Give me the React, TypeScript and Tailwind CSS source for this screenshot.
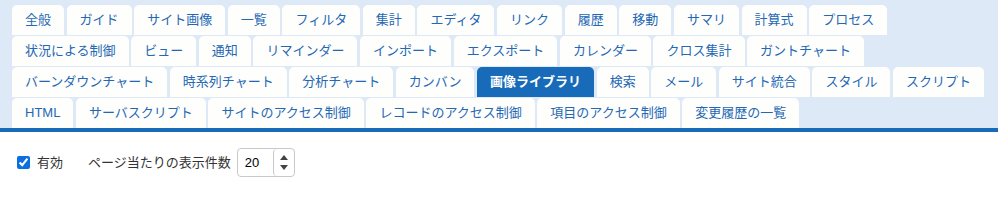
import { useState } from 'react';

const rows: string[] = [
  '全般', 'ガイド', 'サイト画像', '一覧', 'フィルタ', '集計', 'エディタ', 'リンク', '履歴', '移動', 'サマリ', '計算式', 'プロセス',
  '状況による制御', 'ビュー', '通知', 'リマインダー', 'インポート', 'エクスポート', 'カレンダー', 'クロス集計', 'ガントチャート',
  'バーンダウンチャート', '時系列チャート', '分析チャート', 'カンバン', '画像ライブラリ', '検索', 'メール', 'サイト統合', 'スタイル', 'スクリプト',
  'HTML', 'サーバスクリプト', 'サイトのアクセス制御', 'レコードのアクセス制御', '項目のアクセス制御', '変更履歴の一覧',
];

export default function App() {
  const [active, setActive] = useState('画像ライブラリ');
  const [enabled, setEnabled] = useState(true);
  const [perPage, setPerPage] = useState(20);

  return (
    <div className="w-[998px] h-[221px] bg-white text-[13px] font-['Liberation_Sans','Noto_Sans_CJK_JP',sans-serif]">
      {/* Tabs */}
      <div className="bg-[#dde9f7] pt-[5px] px-[12px] border-b-4 border-[#176bb9]">
        <ul className="flex flex-wrap gap-x-[2.6px] gap-y-[1px]">
          {rows.map(label => (
            <li key={label}>
              <button
                onClick={() => setActive(label)}
                className={
                  label === active
                    ? 'h-[30px] px-[13px] rounded-t-[5px] bg-[#176bb9] text-white font-bold leading-[30px] whitespace-nowrap'
                    : 'h-[30px] px-[13px] rounded-t-[5px] bg-[#fefefd] text-[#2468b4] leading-[30px] whitespace-nowrap'
                }
              >
                {label}
              </button>
            </li>
          ))}
        </ul>
      </div>

      {/* Settings */}
      <div className="flex items-center pl-[17px] pt-[16px] text-[#333]">
        <label className="flex items-center gap-[7px]">
          <input
            type="checkbox"
            checked={enabled}
            onChange={e => setEnabled(e.target.checked)}
            className="w-[13px] h-[13px] m-0 accent-[#0b6fe0]"
          />
          <span>有効</span>
        </label>
        <span className="ml-[25px]">ページ当たりの表示件数</span>
        <div className="ml-[6px] flex h-[29px] w-[58px] rounded-[4px] border border-[#c9c9c9] bg-white">
          <input
            value={perPage}
            onChange={e => setPerPage(Number(e.target.value) || 0)}
            className="w-[35px] pl-[7px] text-[13px] text-black outline-none bg-transparent"
          />
          <div className="flex-1 flex flex-col items-center justify-center gap-[5px] border-l border-[#c9c9c9] rounded-[4px]">
            <svg width="8" height="5" viewBox="0 0 8 5"><path d="M0 5 L4 0 L8 5 Z" fill="#444" /></svg>
            <svg width="8" height="5" viewBox="0 0 8 5"><path d="M0 0 L4 5 L8 0 Z" fill="#444" /></svg>
          </div>
        </div>
      </div>
    </div>
  );
}
